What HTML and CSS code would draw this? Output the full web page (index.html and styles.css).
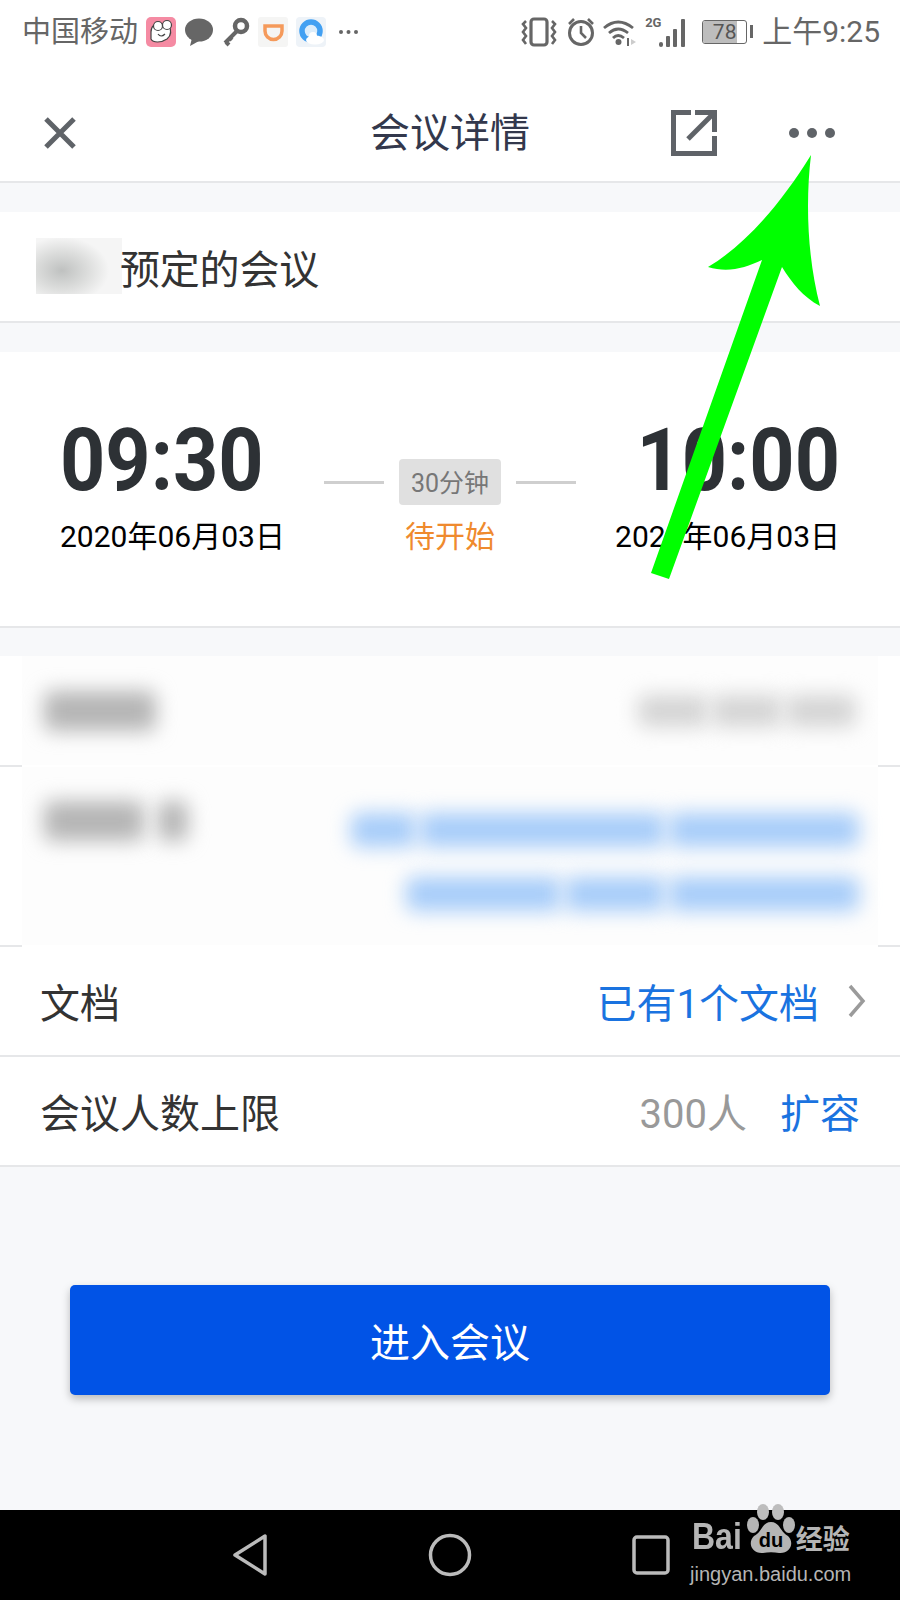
FILE: index.html
```html
<!doctype html>
<html lang="zh-CN">
  <head>
    <meta charset="UTF-8" />
    <meta name="viewport" content="width=device-width, initial-scale=1.0" />
    <title>会议详情</title>
    <link rel="stylesheet" href="styles.css">
  </head>
  <body>
    <div class="page">
      <!-- Status bar -->
      <div class="status-bar">
        <div class="status-left">
          <span class="carrier">中国移动</span>
          <svg class="app-icon" viewBox="0 0 30 30">
            <rect width="30" height="30" rx="5" fill="#f58ba3" />
            <path d="M5 15C5 9 9 6 14 7L22 7C25 12 26 18 21 22C15 26 7 26 5 22Z" fill="#fff" stroke="#444" stroke-width="1.2" />
            <circle cx="12" cy="9" r="4.500" fill="#fff" stroke="#444" stroke-width="1.2" />
            <circle cx="21" cy="8" r="4.500" fill="#fff" stroke="#444" stroke-width="1.2" />
            <path d="M12 17Q15 21 19 17" fill="none" stroke="#444" stroke-width="1.2" />
          </svg>
          <svg class="app-icon" viewBox="0 0 30 30">
            <ellipse cx="15" cy="13" rx="14" ry="11.500" fill="#666" />
            <path d="M8 21L6 29L15 24Z" fill="#666" />
          </svg>
          <svg class="key-icon" viewBox="0 0 28 30">
            <circle cx="19" cy="9" r="6" fill="none" stroke="#666" stroke-width="4.500" />
            <path d="M15 14L3 26M4 25L7 28M8 21L10 23" stroke="#666" stroke-width="4" fill="none" />
          </svg>
          <svg class="app-icon" viewBox="0 0 30 30">
            <rect width="30" height="30" rx="3" fill="#f5f5f4" />
            <path d="M7 9H24V14A8.500 8.500 0 0 1 7 14Z" fill="none" stroke="#f59a5b" stroke-width="3.500" />
          </svg>
          <svg class="app-icon" viewBox="0 0 30 30">
            <rect width="30" height="30" rx="4" fill="#eef3f8" />
            <circle cx="15" cy="14" r="9" fill="#dcedfb" stroke="#42a0f2" stroke-width="5.500" />
            <ellipse cx="19" cy="23" rx="9" ry="4.500" fill="#fff" />
            <circle cx="17" cy="19" r="4" fill="#fff" />
          </svg>
          <svg class="more-icon" viewBox="0 0 21 6">
            <circle cx="3" cy="3" r="2" fill="#666" />
            <circle cx="10.500" cy="3" r="2" fill="#666" />
            <circle cx="18" cy="3" r="2" fill="#666" />
          </svg>
        </div>
        <div class="status-right">
          <svg class="vibrate-icon" viewBox="0 0 36 30">
            <rect x="10" y="2" width="16" height="26" rx="3" fill="none" stroke="#666" stroke-width="3.200" />
            <path d="M5 4L2 7L5 11L2 15L5 19L2 23L5 27M31 4L34 7L31 11L34 15L31 19L34 23L31 27" fill="none" stroke="#666" stroke-width="2.600" />
          </svg>
          <svg class="alarm-icon" viewBox="0 0 28 30">
            <circle cx="14" cy="16" r="11.500" fill="none" stroke="#666" stroke-width="3" />
            <path d="M14 9V16L19 21M2 7L7 2M26 7L21 2" fill="none" stroke="#666" stroke-width="2.600" />
          </svg>
          <svg class="wifi-icon" viewBox="0 0 36 30">
            <path d="M2 11Q16 -1 31 11M7 16Q16 8 26 16M11 21Q16 16 22 21" fill="none" stroke="#666" stroke-width="2.800" />
            <circle cx="16.500" cy="25" r="3" fill="#666" />
            <path d="M25 21V29H27V21Z" fill="#666" />
            <path d="M29 22L34 25L29 28Z" fill="#ccc" />
          </svg>
          <div class="signal">
            <span class="signal-label">2G</span>
            <svg class="signal-icon" viewBox="0 0 30 28">
              <rect x="0" y="23" width="4" height="5" rx="2" fill="#666" />
              <rect x="7" y="17" width="4" height="11" rx="1" fill="#666" />
              <rect x="14" y="10" width="4" height="18" rx="1" fill="#666" />
              <rect x="22" y="0" width="4" height="28" rx="1" fill="#666" />
            </svg>
          </div>
          <div class="battery">
            <div class="battery-body">
              <div class="battery-level"></div>
              <span class="battery-text">78</span>
            </div>
            <div class="battery-cap"></div>
          </div>
          <span class="clock">上午9:25</span>
        </div>
      </div>

      <!-- Top nav -->
      <div class="nav">
        <div class="nav-left">
          <svg class="close-icon" viewBox="0 0 32 32">
            <path d="M2 2L30 30M30 2L2 30" stroke="#5f6368" stroke-width="5" fill="none" />
          </svg>
        </div>
        <div class="nav-title">会议详情</div>
        <div class="nav-right">
          <svg class="open-icon" viewBox="0 0 46 46">
            <path d="M20 2.500H2.500V43.500H43.500V26" fill="none" stroke="#5f6368" stroke-width="5" />
            <path d="M24 0H46V22H41V5H24Z" fill="#5f6368" />
            <path d="M17 29L42 4" stroke="#5f6368" stroke-width="5" />
          </svg>
          <svg class="dots-icon" viewBox="0 0 46 10">
            <circle cx="5" cy="5" r="5" fill="#5f6368" />
            <circle cx="23" cy="5" r="5" fill="#5f6368" />
            <circle cx="41" cy="5" r="5" fill="#5f6368" />
          </svg>
        </div>
      </div>

      <!-- Organizer -->
      <div class="card organizer">
        <div class="blur-name"></div>
        <span class="organizer-text">预定的会议</span>
      </div>

      <!-- Time -->
      <div class="card time-card">
        <div class="time-col">
          <div class="time-big">09:30</div>
          <div class="time-date">2020年06月03日</div>
        </div>
        <div class="time-mid">
          <div class="duration">
            <span class="dash"></span>
            <span class="pill">30分钟</span>
            <span class="dash"></span>
          </div>
          <div class="state">待开始</div>
        </div>
        <div class="time-col time-col-end">
          <div class="time-big">10:00</div>
          <div class="time-date">2020年06月03日</div>
        </div>
      </div>

      <!-- Details -->
      <div class="card details">
        <div class="blur-row blur-row-one">
          <div class="smudge smudge-dark smudge-id"></div>
          <div class="smudge-group">
            <div class="smudge smudge-light smudge-no"></div>
            <div class="smudge smudge-light smudge-no"></div>
            <div class="smudge smudge-light smudge-no"></div>
          </div>
        </div>
        <div class="edge-line"><span></span><span></span></div>
        <div class="blur-row blur-row-two">
          <div class="smudge-group smudge-label-group">
            <div class="smudge smudge-dark smudge-link-label"></div>
            <div class="smudge smudge-dark smudge-link-end"></div>
          </div>
          <div class="link-lines">
            <div class="smudge-group">
              <div class="smudge smudge-blue smudge-w60"></div>
              <div class="smudge smudge-blue smudge-w230"></div>
              <div class="smudge smudge-blue smudge-w190"></div>
            </div>
            <div class="smudge-group">
              <div class="smudge smudge-blue smudge-w150"></div>
              <div class="smudge smudge-blue smudge-w90"></div>
              <div class="smudge smudge-blue smudge-w190"></div>
            </div>
          </div>
        </div>
        <div class="edge-line"><span></span><span></span></div>
        <div class="row row-line">
          <span>文档</span>
          <div class="row-value">
            <span class="link">已有1个文档</span>
            <svg class="chevron" viewBox="0 0 18 34">
              <path d="M2 2L15 17L2 32" fill="none" stroke="#9b9b9b" stroke-width="3.500" />
            </svg>
          </div>
        </div>
        <div class="row">
          <span>会议人数上限</span>
          <div class="row-value row-value-limit">
            <span class="muted">300人</span>
            <span class="link">扩容</span>
          </div>
        </div>
      </div>

      <div class="actions">
        <button class="enter-btn" type="button">进入会议</button>
      </div>

      <!-- Android nav bar -->
      <div class="system-bar">
        <svg class="sys-back" viewBox="0 0 36 44">
          <path d="M33 3V41L3 22Z" fill="none" stroke="#bbb" stroke-width="3.500" stroke-linejoin="round" />
        </svg>
        <svg class="sys-home" viewBox="0 0 44 44">
          <circle cx="22" cy="22" r="19.500" fill="none" stroke="#bbb" stroke-width="3.500" />
        </svg>
        <svg class="sys-recent" viewBox="0 0 38 40">
          <rect x="2" y="2" width="34" height="36" rx="3" fill="none" stroke="#bbb" stroke-width="3.500" />
        </svg>
      </div>

      <!-- Watermark -->
      <div class="watermark">
        <div class="watermark-top">
          <span class="wm-bai">Bai</span>
          <svg class="wm-paw" viewBox="0 0 50 52">
            <ellipse cx="17" cy="9" rx="6" ry="8" fill="#bdbdbd" />
            <ellipse cx="32" cy="9" rx="6" ry="8" fill="#bdbdbd" />
            <ellipse cx="7" cy="22" rx="6" ry="8" fill="#b5b5b5" />
            <ellipse cx="43" cy="22" rx="6" ry="8" fill="#b5b5b5" />
            <path d="M25 19C34 19 34 29 42 33C49 40 44 51 33 50C28 49 22 49 17 50C6 51 1 40 8 33C16 29 16 19 25 19Z" fill="#b5b5b5" />
            <text x="25" y="44" class="wm-du">du</text>
          </svg>
          <span class="wm-cn">经验</span>
        </div>
        <div class="wm-url">jingyan.baidu.com</div>
      </div>

      <!-- Green annotation arrow -->
      <svg class="arrow" viewBox="0 0 900 1600">
        <path d="M811 155C780 205 745 245 708 267C728 273 745 268 762 260L651 573L669 579L782 267C792 283 803 297 820 306C808 260 805 205 811 155Z" fill="#00ff00" />
      </svg>
    </div>
  </body>
</html>
```

FILE: styles.css
```css
/* Page */
body {
  margin: 0;
  font-family: "Roboto", "Noto Sans CJK SC", sans-serif;
  color: #333;
}

.page {
  position: relative;
  width: 900px;
  height: 1600px;
  overflow: hidden;
  display: flex;
  flex-direction: column;
  background-color: #f7f8fa;
}

/* Status bar */
.status-bar {
  height: 60px;
  box-sizing: border-box;
  flex-shrink: 0;
  display: flex;
  justify-content: space-between;
  align-items: center;
  padding: 3px 20px 0 22px;
  background-color: #fff;
  color: #666;
}

.status-left,
.status-right {
  display: flex;
  align-items: center;
}

.carrier,
.clock {
  font-size: 29px;
  line-height: 34px;
}

.app-icon {
  width: 30px;
  height: 30px;
  margin-left: 8px;
}

.key-icon {
  width: 28px;
  height: 30px;
  margin-left: 8px;
}

.more-icon {
  width: 21px;
  height: 6px;
  margin-left: 12px;
}

.vibrate-icon {
  width: 36px;
  height: 30px;
}

.alarm-icon {
  width: 28px;
  height: 30px;
  margin-left: 10px;
}

.wifi-icon {
  width: 36px;
  height: 30px;
  margin-left: 7px;
}

.signal {
  position: relative;
  width: 44px;
  height: 30px;
  margin-left: 7px;
  display: flex;
  justify-content: flex-end;
  align-items: flex-end;
}

.signal-label {
  position: absolute;
  top: -1px;
  left: 0;
  font-size: 13px;
  line-height: 14px;
  font-weight: 700;
}

.signal-icon {
  width: 30px;
  height: 28px;
}

.battery {
  display: flex;
  align-items: center;
  margin-left: 13px;
}

.battery-body {
  position: relative;
  width: 43px;
  height: 22px;
  border: 1.5px solid #666;
  border-radius: 3px;
  overflow: hidden;
}

.battery-level {
  width: 78%;
  height: 100%;
  background-color: #bdbdbd;
}

.battery-text {
  position: absolute;
  top: 0;
  left: 0;
  width: 100%;
  text-align: center;
  font-size: 21px;
  line-height: 22px;
  color: #555;
}

.battery-cap {
  width: 3px;
  height: 13px;
  margin-left: 3px;
  background-color: #666;
}

.clock {
  margin-left: 9px;
  font-size: 30px;
}

/* Top nav */
.nav {
  height: 121px;
  flex-shrink: 0;
  display: grid;
  grid-template-columns: 1fr auto 1fr;
  align-items: center;
  background-color: #fff;
  border-bottom: 2px solid #e6e7e9;
}

.nav-left {
  padding: 24px 0 0 44px;
  display: flex;
}

.close-icon {
  width: 32px;
  height: 32px;
}

.nav-title {
  padding-top: 26px;
  font-size: 40px;
  line-height: 50px;
  color: #33384c;
}

.nav-right {
  display: flex;
  justify-content: flex-end;
  align-items: center;
  gap: 72px;
  padding: 24px 65px 0 0;
}

.open-icon {
  width: 46px;
  height: 46px;
}

.dots-icon {
  width: 46px;
  height: 10px;
}

/* Cards */
.card {
  flex-shrink: 0;
  margin-top: 29px;
  background-color: #fff;
  border-bottom: 2px solid #e6e7e9;
}

.organizer {
  height: 109px;
  display: flex;
  align-items: center;
  padding-left: 36px;
  font-size: 40px;
}

.organizer-text {
  margin-left: -2px;
  letter-spacing: -0.2px;
}

.blur-name {
  width: 86px;
  height: 56px;
  margin-top: -2px;
  background: radial-gradient(ellipse 55% 60% at 30% 58%, #bfc1c0 0, #dcdddc 55%, #f5f5f5 100%);
}

/* Time block */
.time-card {
  height: 276px;
  box-sizing: border-box;
  display: grid;
  grid-template-columns: 1fr auto 1fr;
  align-items: start;
  padding: 65px 60px 0 60px;
}

.time-col {
  display: flex;
  flex-direction: column;
  align-items: flex-start;
}

.time-col-end {
  align-items: flex-end;
}

.time-big {
  font-size: 79px;
  line-height: 86px;
  font-weight: 700;
  color: #2d3135;
  transform: scaleY(1.1); /* reference digits are stretched tall */
}

.time-date {
  margin-top: 14px;
  font-size: 30px;
  line-height: 40px;
  color: #000;
}

.time-mid {
  display: flex;
  flex-direction: column;
  align-items: center;
  padding-top: 42px;
}

.duration {
  display: flex;
  align-items: center;
  gap: 15px;
}

.dash {
  width: 60px;
  height: 3px;
  background-color: #cfcfcf;
}

.pill {
  width: 102px;
  height: 46px;
  text-align: center;
  font-size: 25px;
  line-height: 49px;
  color: #777;
  background-color: #e0e0e0;
  border-radius: 4px;
}

.state {
  margin-top: 12px;
  font-size: 30px;
  line-height: 40px;
  color: #ef8a2e;
}

/* Detail rows */
.details {
  margin-top: 28px;
  font-size: 40px;
}

.blur-row {
  margin: 0 22px;
  padding: 0 22px;
  background-color: #fdfdfd;
  display: flex;
  justify-content: space-between;
  box-sizing: border-box;
}

.blur-row-one {
  height: 109px;
  align-items: center;
}

.blur-row-two {
  height: 178px;
  padding-top: 34px;
  align-items: flex-start;
}

.edge-line {
  height: 2px;
  display: flex;
  justify-content: space-between;
}

.edge-line span {
  width: 22px;
  background-color: #e6e7e9;
}

.smudge-group {
  display: flex;
  justify-content: flex-end;
  gap: 4px;
}

.smudge-label-group {
  justify-content: flex-start;
  gap: 14px;
}

.smudge {
  filter: blur(10px);
  border-radius: 8px;
}

.smudge-dark {
  background-color: #b5b5b5;
}

.smudge-light {
  background-color: #d4d4d4;
}

.smudge-blue {
  background-color: #a6ccf9;
}

.smudge-id {
  width: 112px;
  height: 40px;
}

.smudge-no {
  width: 70px;
  height: 32px;
}

.smudge-link-label {
  width: 100px;
  height: 40px;
}

.smudge-link-end {
  width: 30px;
  height: 40px;
}

.link-lines {
  display: flex;
  flex-direction: column;
  align-items: flex-end;
  gap: 30px;
  padding-top: 12px;
  margin-right: -3px;
}

.smudge-w60,
.smudge-w90,
.smudge-w150,
.smudge-w190,
.smudge-w230 {
  height: 34px;
}

.smudge-w60 {
  width: 65px;
}

.smudge-w90 {
  width: 100px;
}

.smudge-w150 {
  width: 155px;
}

.smudge-w190 {
  width: 190px;
}

.smudge-w230 {
  width: 245px;
}

.row {
  height: 108px;
  display: flex;
  justify-content: space-between;
  align-items: center;
  padding: 0 40px 0 40px;
}

.row-line {
  border-bottom: 2px solid #e6e7e9;
  padding-right: 34px;
}

.row-value {
  display: flex;
  align-items: center;
}

.row-value-limit {
  gap: 33px;
}

.link {
  color: #1a73e0;
}

.muted {
  color: #999;
}

.chevron {
  width: 18px;
  height: 34px;
  margin-left: 29px;
}

/* Enter button */
.actions {
  flex: 1;
  padding: 118px 70px 0 70px;
}

.enter-btn {
  width: 100%;
  height: 110px;
  border: none;
  border-radius: 5px;
  background-color: #0153e6;
  color: #fff;
  font-family: "Roboto", "Noto Sans CJK SC", sans-serif;
  font-size: 40px;
  box-shadow: 0 4px 8px rgba(0, 0, 0, 0.25);
}

/* Android nav bar */
.system-bar {
  height: 90px;
  flex-shrink: 0;
  background-color: #000;
  display: flex;
  align-items: center;
  padding-left: 232px;
}

.sys-back {
  width: 36px;
  height: 44px;
}

.sys-home {
  width: 44px;
  height: 44px;
  margin-left: 160px;
}

.sys-recent {
  width: 38px;
  height: 40px;
  margin-left: 160px;
}

/* Watermark */
.watermark {
  position: absolute;
  left: 690px;
  top: 1503px;
  width: 164px;
  color: #b5b5b5;
  font-family: "Liberation Sans", sans-serif;
}

.watermark-top {
  display: flex;
  align-items: flex-end;
  height: 52px;
  white-space: nowrap;
}

.wm-bai {
  font-size: 32px;
  line-height: 32px;
  font-weight: 700;
  margin-left: 2px;
  transform: scaleY(1.15);
  transform-origin: bottom;
}

.wm-paw {
  width: 50px;
  height: 52px;
  margin-left: 4px;
  flex-shrink: 0;
}

.wm-du {
  font-family: "Liberation Sans", sans-serif;
  font-size: 20px;
  font-weight: 700;
  text-anchor: middle;
  fill: #000;
}

.wm-cn {
  font-family: "Noto Sans CJK SC", sans-serif;
  font-size: 27px;
  line-height: 34px;
  font-weight: 700;
  flex-shrink: 0;
}

.wm-url {
  margin-top: 7px;
  font-size: 20px;
  line-height: 24px;
  white-space: nowrap;
}

/* Annotation */
.arrow {
  position: absolute;
  top: 0;
  left: 0;
  width: 900px;
  height: 1600px;
  pointer-events: none;
}
```
